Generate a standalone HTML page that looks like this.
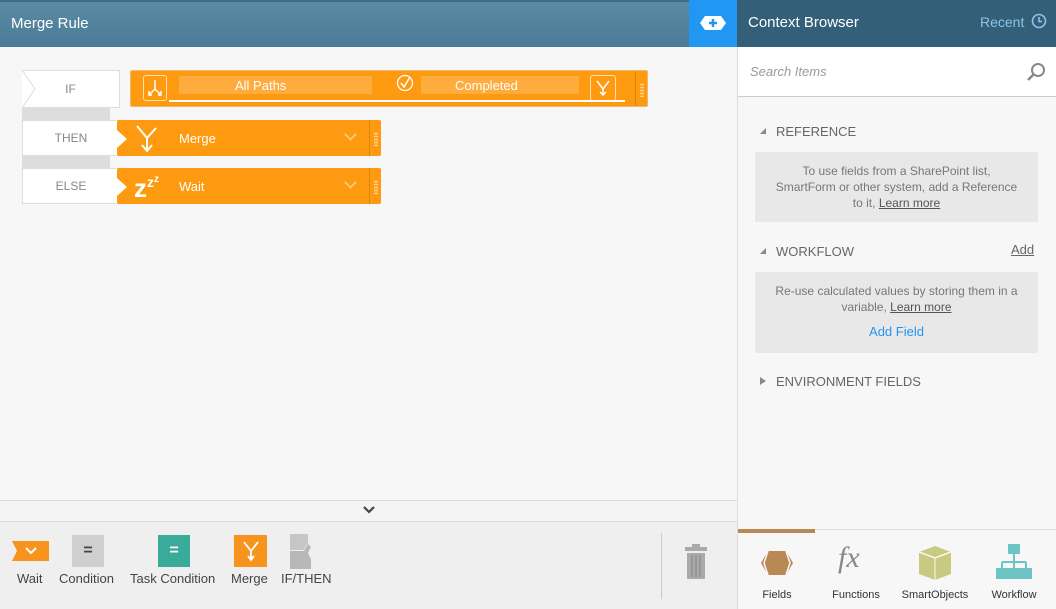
<!DOCTYPE html>
<html><head><meta charset="utf-8"><style>
*{box-sizing:border-box;margin:0;padding:0}
body{width:1056px;height:609px;overflow:hidden;font-family:"Liberation Sans",sans-serif;background:#f7f7f7;position:relative;font-size:13px}
.a{position:absolute}
.lbl{background:#fff;border:1px solid #ddd;color:#888;font-size:12px;display:flex;align-items:center;justify-content:center}
.blk{background:#fd9a0f;color:#fff;border-radius:2px}
.blk .t{position:absolute;left:62px;top:11px;font-size:13px}
.grip{position:absolute;right:0;top:0;width:12px;height:100%;border-left:1px solid #e08500}
.grip:after{content:"";position:absolute;left:4px;top:12px;width:4px;height:14px;background:radial-gradient(circle,#ffd08a 0.8px,transparent 1.1px) 0 0/2px 3px}
.chev{position:absolute;right:26px;top:10px;width:9px;height:9px;border-right:2px solid #ffc66d;border-bottom:2px solid #ffc66d;transform:rotate(45deg)}
.tb{font-size:13px;color:#444}
.ft{font-size:11px;color:#333;text-align:center;width:80px}
.eq{display:flex;align-items:center;justify-content:center;font-weight:bold;font-size:16px}
</style></head><body>
<div class="a" style="left:0;top:0;width:689px;height:47px;background:linear-gradient(#5a8aa4,#4b7c97);border-top:2px solid #3f6d86"></div>
<div class="a" style="left:11px;top:15px;color:#fff;font-size:15px">Merge Rule</div>
<div class="a" style="left:689px;top:0;width:48px;height:47px;background:#2196f3"></div>
<svg class="a" style="left:700px;top:15px" width="26" height="16"><polygon points="5,1 21,1 26,8 21,15 5,15 0,8" fill="#fff"/><path d="M13 4v8M9 8h8" stroke="#2196f3" stroke-width="2.5"/></svg>
<div class="a" style="left:737px;top:0;width:319px;height:47px;background:#336078"></div>
<div class="a" style="left:748px;top:14px;color:#fff;font-size:15px">Context Browser</div>
<div class="a" style="left:980px;top:14px;color:#8cc4ea;font-size:14px">Recent</div>
<svg class="a" style="left:1031px;top:13px" width="16" height="16"><circle cx="8" cy="8" r="6.5" fill="none" stroke="#8cc4ea" stroke-width="1.6"/><path d="M8 4v4.5h3" stroke="#8cc4ea" stroke-width="1.6" fill="none"/></svg>
<div class="a lbl" style="left:22px;top:70px;width:98px;height:38px;border-left:none">IF</div>
<svg class="a" style="left:22px;top:70px" width="14" height="38"><path d="M0 0L13 19L0 38" fill="none" stroke="#ddd"/></svg>
<div class="a" style="left:22px;top:108px;width:88px;height:12px;background:#ddd"></div>
<div class="a lbl" style="left:22px;top:120px;width:98px;height:36px">THEN</div>
<div class="a" style="left:22px;top:156px;width:88px;height:12px;background:#ddd"></div>
<div class="a lbl" style="left:22px;top:168px;width:98px;height:36px">ELSE</div>

<div class="a blk" style="left:130px;top:70px;width:518px;height:37px;border:1px solid #f2b56a">
 <div class="a" style="left:12px;top:4px;width:24px;height:26px;border:1px solid #ffe1b3;border-radius:3px"></div>
 <svg class="a" style="left:15px;top:8px" width="18" height="18"><path d="M9 1v9M9 10l-5 5M9 10l5 5M3 12v4h3M15 12v4h-3" stroke="#fff" stroke-width="1.5" fill="none"/></svg>
 <div class="a" style="left:48px;top:5px;width:193px;height:18px;background:#fdac3d"></div>
 <div class="a" style="left:104px;top:7px;font-size:13px">All Paths</div>
 <svg class="a" style="left:265px;top:3px" width="18" height="18"><circle cx="9" cy="9" r="7.5" fill="none" stroke="#fff" stroke-width="1.3"/><path d="M5 9l3 4 6-10" stroke="#fff" stroke-width="1.5" fill="none"/></svg>
 <div class="a" style="left:290px;top:5px;width:158px;height:18px;background:#fdac3d"></div>
 <div class="a" style="left:324px;top:7px;font-size:13px">Completed</div>
 <div class="a" style="left:459px;top:4px;width:26px;height:26px;border:1px solid #ffe1b3;border-radius:3px"></div>
 <svg class="a" style="left:463px;top:8px" width="18" height="18"><path d="M3 2l6 8 6-8M9 10v6M6 13l3 3 3-3" stroke="#fff" stroke-width="1.5" fill="none"/></svg>
 <div class="a" style="left:38px;top:29px;width:456px;height:1.5px;background:#fff"></div>
 <div class="grip"></div>
</div>

<div class="a blk" style="left:117px;top:120px;width:264px;height:36px">
 <svg class="a" style="left:0;top:10px" width="12" height="18"><path d="M0 0L10 9L0 18z" fill="#fff"/></svg>
 <svg class="a" style="left:16px;top:3px" width="30" height="30"><path d="M4 3l10 12 9-10M14 15v12M9 22l5 6 5-6" stroke="#fff" stroke-width="2" fill="none"/></svg>
 <div class="t">Merge</div><div class="chev"></div><div class="grip"></div>
</div>
<div class="a blk" style="left:117px;top:168px;width:264px;height:36px">
 <svg class="a" style="left:0;top:10px" width="12" height="18"><path d="M0 0L10 9L0 18z" fill="#fff"/></svg>
 <div class="a" style="left:17px;top:7px;font-weight:bold;font-size:26px;line-height:26px">z<span style="font-size:14px;vertical-align:top;line-height:14px">z</span><span style="font-size:10px;vertical-align:top;line-height:10px">z</span></div>
 <div class="t">Wait</div><div class="chev"></div><div class="grip"></div>
</div>

<div class="a" style="left:0;top:500px;width:737px;height:22px;background:#f4f4f4;border-top:1px solid #ddd;border-bottom:1px solid #ddd"></div>
<svg class="a" style="left:362px;top:505px" width="14" height="10"><path d="M2 2l5 5 5-5" stroke="#444" stroke-width="2.2" fill="none"/></svg>
<div class="a" style="left:0;top:522px;width:737px;height:87px;background:#efefef"></div>
<svg class="a" style="left:12px;top:541px" width="37" height="20"><path d="M0 0h37v20H0l5-10z" fill="#f7941d"/><path d="M14 7l5 5 5-5" stroke="#fff" stroke-width="2" fill="none"/></svg>
<div class="a tb" style="left:17px;top:571px">Wait</div>
<div class="a eq" style="left:72px;top:535px;width:32px;height:32px;background:#cfcfcf;color:#444">=</div>
<div class="a tb" style="left:59px;top:571px">Condition</div>
<div class="a eq" style="left:158px;top:535px;width:32px;height:32px;background:#3aaa9a;color:#fff">=</div>
<div class="a tb" style="left:130px;top:571px">Task Condition</div>
<div class="a" style="left:234px;top:535px;width:33px;height:32px;background:#f7941d"></div>
<svg class="a" style="left:240px;top:539px" width="22" height="24"><path d="M4 3l7 9 7-9M11 12v8M8 17l3 4 3-4" stroke="#fff" stroke-width="1.8" fill="none"/></svg>
<div class="a tb" style="left:231px;top:571px">Merge</div>
<svg class="a" style="left:289px;top:533px" width="34" height="36"><path d="M1 1h18v9l-4 7H1z" fill="#c6c6c6"/><path d="M1 18h14l4-7 3 3l-3 6l3 6v10H1z" fill="#b8b8b8"/></svg>
<div class="a tb" style="left:281px;top:571px">IF/THEN</div>
<div class="a" style="left:661px;top:533px;width:1px;height:66px;background:#ccc"></div>
<svg class="a" style="left:683px;top:544px" width="26" height="36"><rect x="9" y="0" width="8" height="3" fill="#aaa"/><rect x="2" y="3" width="22" height="4" fill="#aaa"/><rect x="4" y="9" width="18" height="26" fill="#aaa"/><path d="M9 11v22M13 11v22M17 11v22" stroke="#8a8a8a" stroke-width="1.2"/></svg>

<div class="a" style="left:737px;top:47px;width:1px;height:562px;background:#ddd"></div>
<div class="a" style="left:738px;top:47px;width:318px;height:50px;background:#fff;border-bottom:1px solid #ccc"></div>
<div class="a" style="left:750px;top:64px;color:#999;font-style:italic;font-size:13px">Search Items</div>
<svg class="a" style="left:1026px;top:61px" width="22" height="22"><circle cx="12" cy="9" r="6" fill="none" stroke="#888" stroke-width="2"/><path d="M8 13l-6 6" stroke="#888" stroke-width="2.5"/></svg>
<svg class="a" style="left:759px;top:127px" width="8" height="8"><path d="M7 1v6H1z" fill="#888"/></svg>
<div class="a" style="left:776px;top:124px;color:#666;font-size:13px">REFERENCE</div>
<div class="a" style="left:755px;top:152px;width:283px;height:70px;background:#e8e8e8;border-radius:2px;color:#777;font-size:12px;text-align:center;line-height:16px;padding-top:11px">To use fields from a SharePoint list,<br>SmartForm or other system, add a Reference<br>to it, <u style="color:#555">Learn more</u></div>
<svg class="a" style="left:759px;top:247px" width="8" height="8"><path d="M7 1v6H1z" fill="#888"/></svg>
<div class="a" style="left:776px;top:244px;color:#666;font-size:13px">WORKFLOW</div>
<div class="a" style="left:1011px;top:242px;color:#666;font-size:13px;text-decoration:underline">Add</div>
<div class="a" style="left:755px;top:272px;width:283px;height:81px;background:#e8e8e8;border-radius:2px;color:#777;font-size:12px;text-align:center;line-height:16px;padding-top:11px">Re-use calculated values by storing them in a<br>variable, <u style="color:#555">Learn more</u><div style="color:#2196f3;font-size:13px;margin-top:9px">Add Field</div></div>
<svg class="a" style="left:759px;top:376px" width="8" height="10"><path d="M1 1l6 4-6 4z" fill="#888"/></svg>
<div class="a" style="left:776px;top:374px;color:#666;font-size:13px">ENVIRONMENT FIELDS</div>

<div class="a" style="left:738px;top:529px;width:318px;height:80px;background:#f7f7f7;border-top:1px solid #ddd"></div>
<div class="a" style="left:738px;top:529px;width:77px;height:4px;background:#b98955"></div>
<svg class="a" style="left:759px;top:549px" width="36" height="28"><polygon points="9,2 27,2 34,14 27,26 9,26 2,14" fill="#b98955"/><path d="M9 2L5 14L9 26M27 2L31 14L27 26" stroke="#f7f7f7" stroke-width="1.5" fill="none"/></svg>
<div class="a ft" style="left:737px;top:589px">Fields</div>
<div class="a" style="left:838px;top:541px;font-family:'Liberation Serif',serif;font-style:italic;font-size:30px;color:#888">fx</div>
<div class="a ft" style="left:816px;top:589px">Functions</div>
<svg class="a" style="left:917px;top:544px" width="36" height="38"><path d="M2 8L18 2l16 6v22l-16 6-16-6z" fill="#c8ca80"/><path d="M2 8l16 6 16-6" stroke="#f7f7f7" stroke-width="1.5" fill="none"/><path d="M18 14v22" stroke="#f7f7f7" stroke-width="1"/></svg>
<div class="a ft" style="left:895px;top:589px">SmartObjects</div>
<svg class="a" style="left:996px;top:544px" width="36" height="36"><rect x="12" y="0" width="12" height="10" fill="#6cc4c4"/><path d="M18 10v8M6 18h24M6 18v6M30 18v6M18 18v6" stroke="#6cc4c4" stroke-width="2" fill="none"/><rect x="0" y="24" width="12" height="11" fill="#6cc4c4"/><rect x="12" y="24" width="12" height="11" fill="#6cc4c4"/><rect x="24" y="24" width="12" height="11" fill="#6cc4c4"/></svg>
<div class="a ft" style="left:974px;top:589px">Workflow</div>
</body></html>
